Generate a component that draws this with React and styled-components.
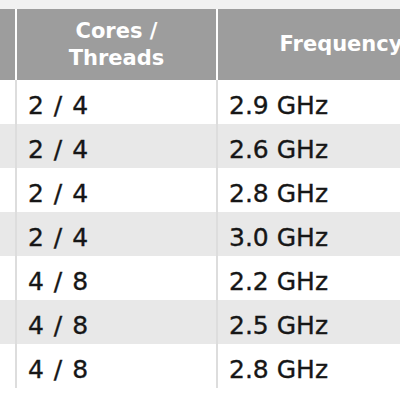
import styled, { createGlobalStyle } from "styled-components";

const GlobalStyle = createGlobalStyle`
  html, body {
    margin: 0;
    padding: 0;
    background: #ffffff;
    overflow: hidden;
  }
  body {
    font-family: "DejaVu Sans", "Liberation Sans", sans-serif;
  }
`;

const Page = styled.div`
  width: 400px;
  height: 400px;
  overflow: hidden;
  background: #ffffff;
`;

const TopStrip = styled.div`
  height: 9px;
  background: #f1f1f1;
`;

const Table = styled.div`
  width: 464px;
  display: grid;
  grid-template-columns: 15px 201px 248px;
`;

const HeadCell = styled.div`
  height: 71px;
  background: #9d9d9d;
  color: #ffffff;
  font-weight: bold;
  font-size: 21px;
  line-height: 27px;
  text-align: center;
  display: flex;
  align-items: center;
  justify-content: center;
  box-sizing: border-box;
  border-left: ${(p) => (p.$first ? "none" : "2px solid #ffffff")};
`;

const Cell = styled.div`
  height: 44px;
  box-sizing: border-box;
  background: ${(p) => (p.$shaded ? "#e8e8e8" : "#ffffff")};
  border-left: ${(p) => (p.$first ? "none" : "2px solid #dddddd")};
  color: #161616;
  font-size: 25px;
  -webkit-text-stroke: 0.35px #161616;
  display: flex;
  align-items: center;
  padding: 6px 0 0 11px;
  white-space: nowrap;
  word-spacing: ${(p) => (p.$wide ? "2px" : "0")};
`;

const rows = [
  ["2 / 4", "2.9 GHz"],
  ["2 / 4", "2.6 GHz"],
  ["2 / 4", "2.8 GHz"],
  ["2 / 4", "3.0 GHz"],
  ["4 / 8", "2.2 GHz"],
  ["4 / 8", "2.5 GHz"],
  ["4 / 8", "2.8 GHz"],
];

export default function App() {
  return (
    <Page>
      <GlobalStyle />
      <TopStrip />
      <Table>
        <HeadCell $first />
        <HeadCell>
          Cores /<br />
          Threads
        </HeadCell>
        <HeadCell>Frequency</HeadCell>
        {rows.map(([cores, freq], i) => (
          <>
            <Cell key={`a${i}`} $first $shaded={i % 2 === 1} />
            <Cell key={`b${i}`} $shaded={i % 2 === 1} $wide>
              {cores}
            </Cell>
            <Cell key={`c${i}`} $shaded={i % 2 === 1}>
              {freq}
            </Cell>
          </>
        ))}
      </Table>
    </Page>
  );
}
